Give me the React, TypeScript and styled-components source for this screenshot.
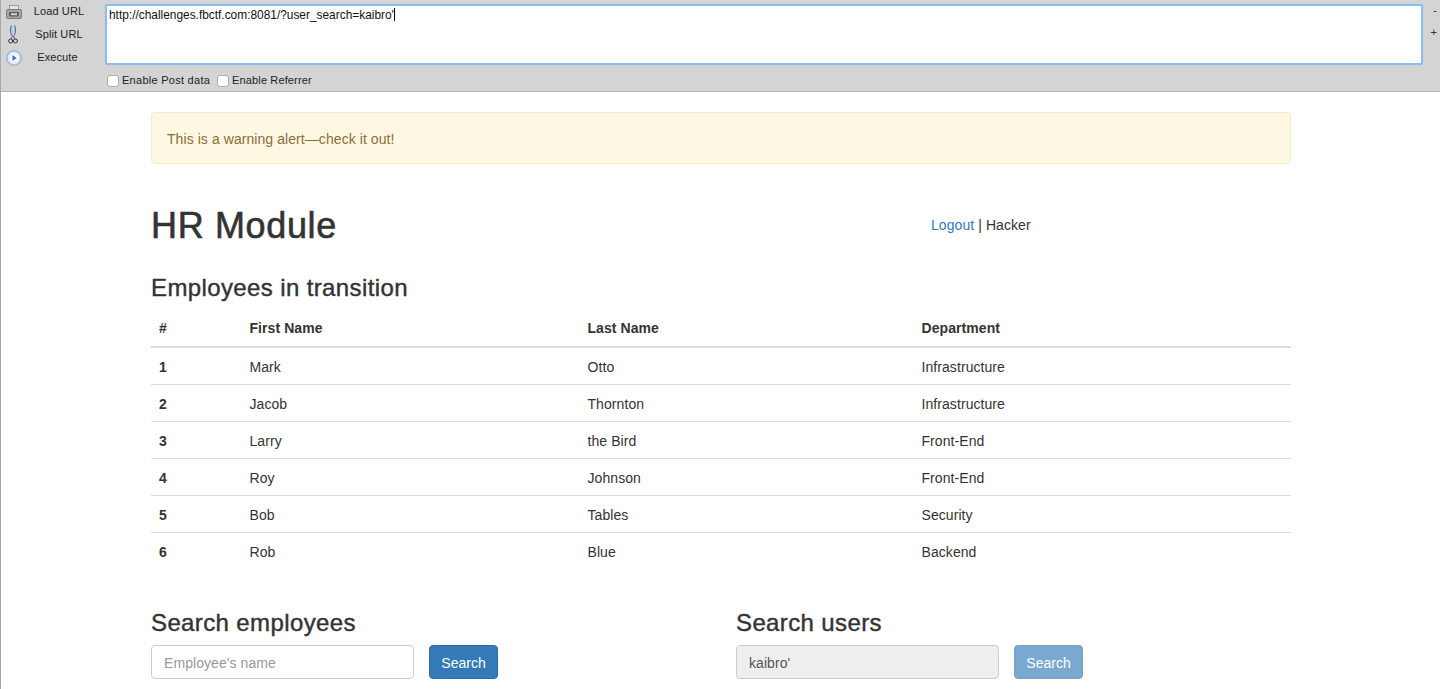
import React from "react";
import styled, { createGlobalStyle } from "styled-components";

interface Employee {
  id: number;
  first: string;
  last: string;
  department: string;
}

const employees: Employee[] = [
  { id: 1, first: "Mark", last: "Otto", department: "Infrastructure" },
  { id: 2, first: "Jacob", last: "Thornton", department: "Infrastructure" },
  { id: 3, first: "Larry", last: "the Bird", department: "Front-End" },
  { id: 4, first: "Roy", last: "Johnson", department: "Front-End" },
  { id: 5, first: "Bob", last: "Tables", department: "Security" },
  { id: 6, first: "Rob", last: "Blue", department: "Backend" },
];

const GlobalStyle = createGlobalStyle`
  html, body {
    margin: 0;
    height: 689px;
    overflow: hidden;
    background: #fff;
  }
  * {
    box-sizing: border-box;
  }
  body {
    font-family: "Liberation Sans", Arial, sans-serif;
    font-size: 14px;
    line-height: 20px;
    letter-spacing: 0.07px;
    color: #333;
  }
`;

const Page = styled.div`
  height: 689px;
  border-left: 1px solid #a8a8a8;
  overflow: hidden;
`;

const Toolbar = styled.div`
  height: 92px;
  margin-left: -1px;
  background: #d4d4d4;
  border-bottom: 1px solid #b4b4b4;
  display: grid;
  grid-template-columns: 105px 1fr 17px;
  font-size: 11px;
  line-height: 13px;
  color: #222;
`;

const Actions = styled.div`
  display: flex;
  flex-direction: column;
`;

const Action = styled.div`
  height: 23px;
  display: grid;
  grid-template-columns: 28px 1fr;
  align-items: center;
`;

const ActionIcon = styled.div`
  display: flex;
  justify-content: center;
`;

const ActionLabel = styled.span<{ $nudge?: number }>`
  width: 62px;
  padding-right: ${(p) => p.$nudge ?? 0}px;
  text-align: center;
  letter-spacing: 0.1px;
`;

const UrlColumn = styled.div`
  display: flex;
  flex-direction: column;
  padding-top: 4px;
`;

const UrlBox = styled.div`
  height: 61px;
  background: #fff;
  border: 2px solid #8dbcf0;
  border-radius: 2px;
  box-shadow: 0 0 1px #8dbcf0;
  padding: 2px 2px;
  color: #111;
  font-size: 11.9px;
  line-height: 14px;
  letter-spacing: 0;
  white-space: nowrap;
`;

const Caret = styled.span`
  display: inline-block;
  width: 1px;
  height: 13px;
  background: #000;
  vertical-align: top;
`;

const Options = styled.div`
  display: flex;
  gap: 7px;
  padding: 9px 0 0 2px;
`;

const Option = styled.label<{ $spacing: number }>`
  display: flex;
  align-items: center;
  gap: 3px;
  font-size: 11px;
  letter-spacing: ${(p) => p.$spacing}px;
`;

const CheckBox = styled.span`
  width: 12px;
  height: 12px;
  background: #fff;
  border: 1px solid #b0b0b0;
  border-radius: 3px;
`;

const ZoomColumn = styled.div`
  display: flex;
  flex-direction: column;
  align-items: flex-end;
  gap: 9px;
  padding: 4px 3px 0 0;
  font-size: 11px;
  color: #333;
`;

const Container = styled.div`
  width: 1140px;
  margin-left: 150px;
  padding-top: 20px;
`;

const Alert = styled.div`
  height: 52px;
  padding: 16px 15px 14px;
  background: #fef8e2;
  border: 1px solid #f6ebc8;
  border-radius: 4px;
  color: #8a6d3b;
`;

const HeaderRow = styled.div`
  display: grid;
  grid-template-columns: 780px 1fr;
  margin-top: 41px;
  align-items: center;
`;

const Title = styled.h1`
  margin: 0;
  padding-top: 1px;
  font-size: 36px;
  line-height: 40px;
  font-weight: 400;
  letter-spacing: 0.65px;
  -webkit-text-stroke: 0.6px #333;
`;

const UserLine = styled.div`
  padding-bottom: 1px;
  color: #333;
`;

const Link = styled.a`
  color: #337ab7;
  text-decoration: none;
`;

const SectionTitle = styled.h3`
  margin: 0;
  font-size: 24px;
  line-height: 26px;
  font-weight: 400;
  letter-spacing: 0.38px;
  -webkit-text-stroke: 0.4px #333;
`;

const TableSection = styled.section`
  margin-top: 29px;
`;

const Table = styled.table`
  width: 100%;
  margin-top: 8px;
  border-collapse: collapse;
  table-layout: fixed;
`;

const Th = styled.th<{ $width?: number }>`
  width: ${(p) => (p.$width ? `${p.$width}px` : "auto")};
  height: 38px;
  padding: 8px;
  text-align: left;
  font-weight: 700;
  border-bottom: 2px solid #ddd;
`;

const Td = styled.td`
  height: 37px;
  padding: 9px 8px 7px;
  border-top: 1px solid #ddd;
`;

const RowHead = styled(Td)`
  font-weight: 700;
`;

const SearchRow = styled.div`
  display: grid;
  grid-template-columns: 585px 1fr;
  margin-top: 40px;
`;

const SearchForm = styled.div`
  display: flex;
  gap: 15px;
  margin-top: 9px;
`;

const Input = styled.div<{ $disabled?: boolean }>`
  width: 263px;
  height: 34px;
  padding: 7px 12px 5px;
  border: 1px solid #ccc;
  border-radius: 4px;
  background: ${(p) => (p.$disabled ? "#eee" : "#fff")};
  color: ${(p) => (p.$disabled ? "#555" : "#999")};
`;

const Button = styled.button<{ $disabled?: boolean }>`
  width: 69px;
  height: 34px;
  padding: 2px 0 0;
  border: 1px solid #2e6da4;
  border-radius: 4px;
  background: #337ab7;
  color: #fff;
  font: inherit;
  opacity: ${(p) => (p.$disabled ? 0.65 : 1)};
`;

const LoadIcon = () => (
  <svg width="16" height="14" viewBox="0 0 16 14">
    <rect x="3.5" y="0.5" width="9" height="4" fill="#e6e6e6" stroke="#9c9c9c" />
    <path d="M2 4.5h12a1.5 1.5 0 0 1 1.5 1.5v6a1.5 1.5 0 0 1-1.5 1.5H2A1.5 1.5 0 0 1 .5 12V6A1.5 1.5 0 0 1 2 4.5z" fill="#a6a6a6" stroke="#7c7c7c" />
    <rect x="3" y="7" width="10" height="4.5" rx="1" fill="#5f5f5f" />
    <rect x="5" y="8.2" width="6" height="2" fill="#d0d0d0" />
  </svg>
);

const SplitIcon = () => (
  <svg width="10" height="19" viewBox="0 0 10 19" fill="none" style={{ marginLeft: -3 }}>
    <path d="M3.4 0.5C2 4 2 8 4.4 11.5M6.6 0.5C8 4 8 8 5.6 11.5" stroke="#4f6f9f" strokeWidth="1.1" />
    <path d="M4 1.5C3.6 4 3.6 7 4.4 9M6 1.5C6.4 4 6.4 7 5.6 9" stroke="#9db8dc" strokeWidth="0.8" />
    <path d="M4.4 11.5L3 14M5.6 11.5L7 14" stroke="#444" strokeWidth="0.9" />
    <circle cx="2.6" cy="16" r="2" stroke="#333" strokeWidth="1" />
    <circle cx="7.4" cy="16" r="2" stroke="#333" strokeWidth="1" />
  </svg>
);

const ExecuteIcon = () => (
  <svg width="16" height="16" viewBox="0 0 16 16">
    <circle cx="8" cy="8" r="7.2" fill="#dbe6f6" stroke="#8fb0dc" strokeWidth="1.2" />
    <circle cx="8" cy="8" r="4.6" fill="#f6f8fc" />
    <path d="M6.5 5l4 3-4 3z" fill="#2f6fc0" />
  </svg>
);

const App: React.FC = () => {
  return (
    <Page>
      <GlobalStyle />
      <Toolbar>
        <Actions>
          <Action>
            <ActionIcon>
              <LoadIcon />
            </ActionIcon>
            <ActionLabel>Load URL</ActionLabel>
          </Action>
          <Action>
            <ActionIcon>
              <SplitIcon />
            </ActionIcon>
            <ActionLabel>Split URL</ActionLabel>
          </Action>
          <Action>
            <ActionIcon>
              <ExecuteIcon />
            </ActionIcon>
            <ActionLabel $nudge={3}>Execute</ActionLabel>
          </Action>
        </Actions>
        <UrlColumn>
          <UrlBox>
            http://challenges.fbctf.com:8081/?user_search=kaibro'
            <Caret />
          </UrlBox>
          <Options>
            <Option $spacing={0.27}>
              <CheckBox />
              Enable Post data
            </Option>
            <Option $spacing={0.13}>
              <CheckBox />
              Enable Referrer
            </Option>
          </Options>
        </UrlColumn>
        <ZoomColumn>
          <span>-</span>
          <span>+</span>
        </ZoomColumn>
      </Toolbar>
      <Container>
        <Alert>This is a warning alert—check it out!</Alert>
        <HeaderRow>
          <Title>HR Module</Title>
          <UserLine>
            <Link href="#">Logout</Link> | Hacker
          </UserLine>
        </HeaderRow>
        <TableSection>
          <SectionTitle>Employees in transition</SectionTitle>
          <Table>
            <thead>
              <tr>
                <Th $width={90.5}>#</Th>
                <Th $width={338}>First Name</Th>
                <Th $width={334}>Last Name</Th>
                <Th>Department</Th>
              </tr>
            </thead>
            <tbody>
              {employees.map((e) => (
                <tr key={e.id}>
                  <RowHead>{e.id}</RowHead>
                  <Td>{e.first}</Td>
                  <Td>{e.last}</Td>
                  <Td>{e.department}</Td>
                </tr>
              ))}
            </tbody>
          </Table>
        </TableSection>
        <SearchRow>
          <div>
            <SectionTitle>Search employees</SectionTitle>
            <SearchForm>
              <Input>Employee's name</Input>
              <Button>Search</Button>
            </SearchForm>
          </div>
          <div>
            <SectionTitle>Search users</SectionTitle>
            <SearchForm>
              <Input $disabled>kaibro'</Input>
              <Button $disabled>Search</Button>
            </SearchForm>
          </div>
        </SearchRow>
      </Container>
    </Page>
  );
};

export default App;
